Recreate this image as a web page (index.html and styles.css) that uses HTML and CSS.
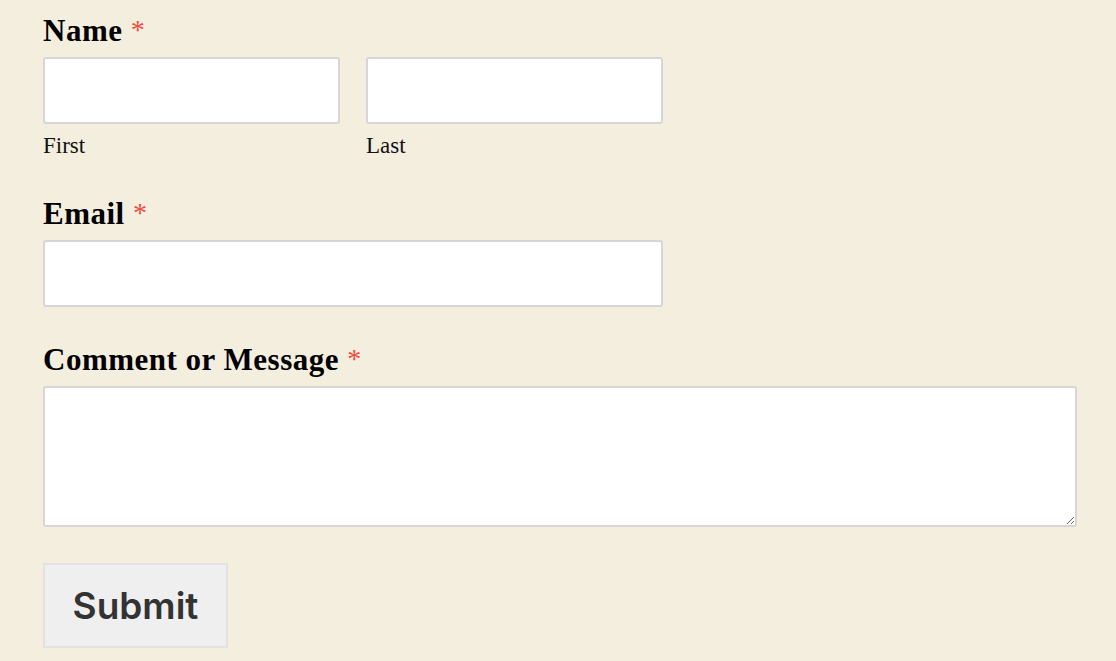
FILE: index.html
```html
<!DOCTYPE html>
<html lang="en">
<head>
<meta charset="utf-8">
<title>Contact form</title>
<link rel="stylesheet" href="styles.css">
</head>
<body>
<form class="form">
  <div class="field field-name">
    <label class="label">Name <span class="req">*</span></label>
    <div class="row">
      <div class="sub">
        <input class="input input-half" type="text">
        <span class="sublabel">First</span>
      </div>
      <div class="sub">
        <input class="input input-half" type="text">
        <span class="sublabel">Last</span>
      </div>
    </div>
  </div>
  <div class="field field-email">
    <label class="label">Email <span class="req">*</span></label>
    <input class="input input-wide" type="email">
  </div>
  <div class="field field-msg">
    <label class="label">Comment or Message <span class="req">*</span></label>
    <textarea class="textarea"></textarea>
  </div>
  <button class="submit" type="button">Submit</button>
</form>
</body>
</html>
```
FILE: styles.css
```css
html, body {
  margin: 0;
  padding: 0;
  background: #f4eedf;
}
body {
  font-family: "Liberation Serif", "DejaVu Serif", serif;
  color: #000;
  width: 1116px;
  height: 661px;
  overflow: hidden;
}
.form {
  padding: 12px 0 0 43px;
  display: flex;
  flex-direction: column;
  align-items: flex-start;
}
.field {
  display: flex;
  flex-direction: column;
  align-items: flex-start;
}
.field-name { margin-bottom: 36px; }
.field-email { margin-bottom: 34px; }
.field-msg { margin-bottom: 36px; }
.label {
  display: block;
  font-size: 31px;
  line-height: 37px;
  height: 37px;
  font-weight: bold;
  letter-spacing: 0.5px;
  margin-bottom: 8px;
  color: #000;
}
.req {
  color: #f04a3e;
  font-weight: normal;
  font-size: 28px;
  line-height: 1;
  letter-spacing: 0;
  vertical-align: 2px;
}
.row {
  display: flex;
  gap: 26px;
}
.sub {
  display: flex;
  flex-direction: column;
}
.input, .textarea {
  box-sizing: border-box;
  background: #fff;
  border: 2px solid #d6d6d6;
  border-radius: 3px;
  margin: 0;
  outline: none;
}
.input-half {
  width: 297px;
  height: 67px;
}
.input-wide {
  width: 620px;
  height: 67px;
}
.textarea {
  width: 1034px;
  height: 141px;
  display: block;
  resize: vertical;
}
.sublabel {
  margin-top: 9px;
  font-size: 23px;
  line-height: 26px;
  color: #111;
}
.submit {
  box-sizing: border-box;
  width: 185px;
  height: 85px;
  background: #efefef;
  border: 2px solid #e2e2e2;
  border-radius: 0;
  font-family: Inter, "Liberation Sans", sans-serif;
  font-weight: 600;
  font-size: 37px;
  color: #333;
  padding: 0;
  margin: 0;
}
```
